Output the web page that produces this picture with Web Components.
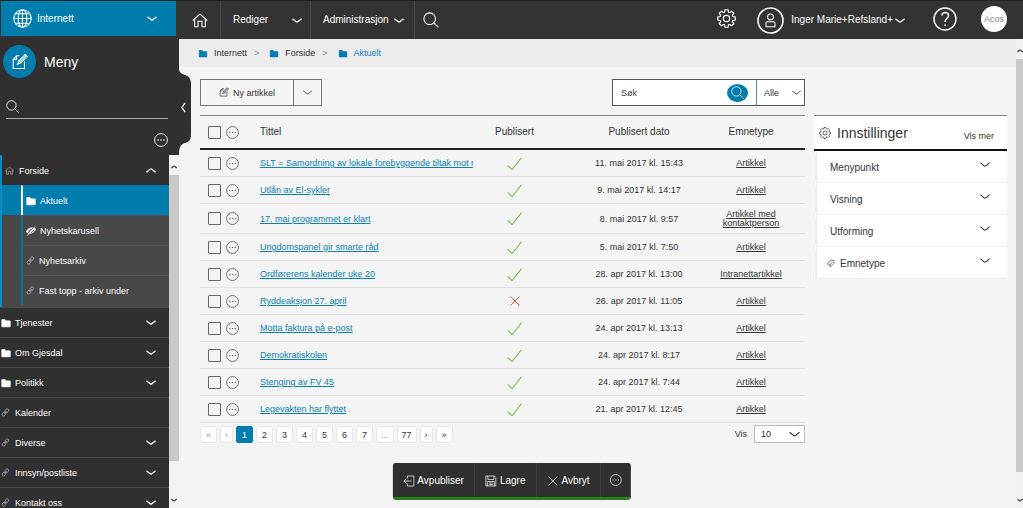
<!DOCTYPE html>
<html lang="no">
<head>
<meta charset="utf-8">
<meta name="viewport" content="width=device-width, initial-scale=1">
<title>Aktuelt</title>
<style>
  html, body { margin: 0; height: 100%; }
  body { font: 10px/12px "Liberation Sans", Arial, sans-serif; color: #333; background: #f4f4f4; overflow: hidden; }
</style>
</head>
<body>
<cms-app></cms-app>

<script>
const BASE = `<style>
  *, *::before { box-sizing: border-box; }
  button, input, select { font: inherit; color: inherit; margin: 0; padding: 0; border: 0; background: none; border-radius: 0; text-align: left; }
  button { cursor: pointer; }
  a { color: inherit; text-decoration: none; }
  h1, h2, ul, ol { margin: 0; padding: 0; font: inherit; list-style: none; }
</style>`;

function component(name, html, setup) {
  const template = document.createElement('template');
  template.innerHTML = BASE + html;
  customElements.define(name, class extends HTMLElement {
    connectedCallback() {
      if (this.shadowRoot) return;
      const root = this.attachShadow({ mode: 'open' });
      root.append(template.content.cloneNode(true));
      if (setup) setup(this, root);
    }
  });
}

/* Icons share a 24-unit grid and take their colour from the text. */
const gear = (() => {
  const p = [];
  for (let i = 0; i < 8; i++) {
    [[-17, 8.4], [-10, 11.2], [10, 11.2], [17, 8.4]].forEach(([d, r]) => {
      const a = (i * 45 + d) * Math.PI / 180;
      p.push((12 + r * Math.sin(a)).toFixed(2) + ' ' + (12 - r * Math.cos(a)).toFixed(2));
    });
  }
  return `<path d="M${p.join('L')}Z"/><circle cx="12" cy="12" r="4"/>`;
})();
const ICONS = {
  down: ['0 0 24 12', '<path d="M1 2C5 4 9 10 12 10S19 4 23 2"/>'],
  up: ['0 0 24 12', '<path d="M1 10C5 8 9 2 12 2S19 8 23 10"/>'],
  left: ['0 0 12 24', '<path d="M10 1L2 12L10 23"/>'],
  globe: ['0 0 24 24', '<circle cx="12" cy="12" r="11"/><ellipse cx="12" cy="12" rx="5.5" ry="11"/><path d="M12 1V23M1 12H23M3 6H21M3 18H21"/>'],
  home: ['0 0 24 24', '<path d="M1 13L12 3L23 13M4 11V22H9V14H15V22H20V11"/>'],
  search: ['0 0 24 24', '<circle cx="10" cy="10" r="8.7"/><path d="M16.5 16.5L23 23"/>'],
  gear: ['0 0 24 24', gear],
  person: ['0 0 24 24', '<circle cx="12" cy="12" r="11.1"/><g stroke-width="0.9"><circle cx="12" cy="8.8" r="2.6"/><path d="M8 17.5V14.4Q8 13.2 9.2 13.2H14.8Q16 13.2 16 14.4V17.5Z"/></g>'],
  help: ['0 0 24 24', '<circle cx="12" cy="12" r="11"/><path d="M9 8.5C9 4.5 15.5 4.5 15.5 8.5C15.5 11.5 12 11.5 12 15M12 17.5V19"/>'],
  edit: ['0 0 24 24', '<path d="M12 4H8L3 9V22H19V12M8 4V9H3M9 16L11 11L20 2L23 5L14 14ZM11 11L14 14M12.5 12.5L21 4"/>'],
  dots: ['0 0 24 24', '<circle cx="12" cy="12" r="11"/><path d="M6 12H8M11 12H13M16 12H18" stroke-width="2.2"/>'],
  folder: ['0 0 24 24', '<path d="M2 4H10L12 7H22V21H2Z" fill="currentColor"/>'],
  link: ['0 0 24 24', '<rect x="12" y="2" width="8" height="11" rx="4" transform="rotate(35 16 7)"/><rect x="4" y="11" width="8" height="11" rx="4" transform="rotate(35 8 16)"/><path d="M9 15L15 8"/>'],
  hidden: ['0 0 24 24', '<path d="M1 14C5 4 16 2 23 7C20 17 8 21 1 14Z" fill="currentColor"/><path d="M3 23L22 1"/><path d="M1 21L20 1M6 14L11 8M12 17L19 9" stroke="#484848"/>'],
  check: ['0 0 24 24', '<path d="M1 15L8 22L23 3"/>'],
  cross: ['0 0 24 24', '<path d="M3 3L21 21M21 3L3 21"/>'],
  tag: ['0 0 24 24', '<path d="M3 12L12 4L21 3L21 12L12 21ZM8 12L11 16L17 8"/>'],
  exit: ['0 0 24 24', '<path d="M9 7V2H22V22H9V17M17 12H2M7 7L2 12L7 17"/>'],
  save: ['0 0 24 24', '<path d="M2 2H19L22 5V22H2ZM6 2V9H18V2M5 22V13H19V22M8 16H16M8 19H16"/>']
};
component('cms-icon', `<style>
  :host { display: inline-block; width: 12px; height: 12px; flex: none; }
  svg { display: block; width: 100%; height: 100%; fill: none; stroke: currentColor; stroke-width: var(--stroke, 2); }
</style><svg aria-hidden="true"></svg>`, (host, root) => {
  const [box, body] = ICONS[host.getAttribute('name')];
  const svg = root.querySelector('svg');
  svg.setAttribute('viewBox', box);
  svg.innerHTML = body;
});

component('cms-scroll', `<style>
  :host { display: flex; flex-direction: column; align-items: center; justify-content: space-between; background: #f2f2f2; color: #444; overflow: hidden; }
  .thumb { width: 100%; flex: 1; background: #c9c9c9; }
  cms-icon { width: 6px; height: 4px; margin: 10px 0 6px; --stroke: 5; }
  cms-icon:last-child { margin: var(--end, 26px) 0 6px; }
</style><cms-icon name="up"></cms-icon><div class="thumb"></div><cms-icon name="down"></cms-icon>`);

component('cms-header', `<style>
  :host { display: flex; height: 39px; background: #333; color: #fff; border-top: 1px solid #222; }
  button, a { display: flex; align-items: center; }
  .site { width: 175px; height: 35px; margin: 0 4px 0 1px; padding: 0 19px 0 12px; gap: 5px; background: #007cad; }
  .site cms-icon:first-child { width: 19px; height: 19px; --stroke: 1.4; }
  .site span { flex: 1; }
  nav { display: flex; margin-left: -1px; }
  nav > * { border-right: 1px solid #484848; padding: 0 12px; height: 38px; }
  .home { width: 42px; padding: 0 13px; }
  .home cms-icon { width: 16px; height: 16px; --stroke: 1.6; }
  .edit { width: 90px; justify-content: space-between; padding-right: 8px; }
  .admin { width: 104px; justify-content: space-between; padding-right: 10px; }
  .find { border: 0; padding: 0 8px; }
  .find cms-icon { width: 16px; height: 16px; --stroke: 1.6; }
  .down { width: 10px; height: 5px; --stroke: 3; }
  .tools { display: flex; align-items: center; margin: 0 16px 3px auto; }
  .gear { width: 19px; height: 19px; --stroke: 1.5; }
  .user { margin: 3px 28px 0 21px; gap: 2px; }
  .user cms-icon:first-child { width: 27px; height: 27px; margin-right: 5px; --stroke: 1.4; }
  .help { width: 24px; height: 24px; --stroke: 1.4; }
  .acos { width: 26px; height: 26px; margin-left: 24px; border-radius: 50%; background: #fff; color: #888; font-size: 9px; justify-content: center; }
</style>
<button class="site"><cms-icon name="globe"></cms-icon><span>Internett</span><cms-icon class="down" name="down"></cms-icon></button>
<nav>
  <a class="home" href="#" aria-label="Hjem"><cms-icon name="home"></cms-icon></a>
  <button class="edit">Rediger<cms-icon class="down" name="down"></cms-icon></button>
  <button class="admin">Administrasjon<cms-icon class="down" name="down"></cms-icon></button>
  <button class="find" aria-label="Finn"><cms-icon name="search"></cms-icon></button>
</nav>
<div class="tools">
  <button aria-label="Oppsett"><cms-icon class="gear" name="gear"></cms-icon></button>
  <button class="user"><cms-icon name="person"></cms-icon>Inger Marie+Refsland+<cms-icon class="down" name="down"></cms-icon></button>
  <button aria-label="Hjelp"><cms-icon class="help" name="help"></cms-icon></button>
  <a class="acos" href="#">Acos</a>
</div>`);

component('cms-tree-item', `<style>
  :host { display: block; font-size: 9px; color: #fff; }
  a { display: flex; align-items: center; height: 30px; padding: 0 13px 0 1px; border-top: 1px solid #4a4a4a; gap: 4px; }
  span { flex: 1; }
  .icon { width: 10px; height: 10px; }
  .down { width: 10px; height: 5px; --stroke: 3.4; }
  :host([icon="link"]) .icon, :host([icon="home"]) .icon { color: #aaa; width: 9px; height: 9px; margin-right: 1px; }
  :host([icon="home"]) a { padding-left: 5px; border-color: #303030; }
  :host([sub]) { background: #484848; padding-left: 21px; }
  :host([sub]) a { border-left: 2px solid #077594; padding-left: 3px; border-top-color: #545454; }
  :host([sub]) .icon { margin-right: 0; }
  :host([current]) { background: #007cad; }
  :host([current]) a { border-left-color: #fff; border-top-color: #007cad; }
</style><a href="#"></a>`, (host, root) => {
  const a = root.querySelector('a');
  const arrow = host.getAttribute('arrow');
  a.innerHTML = `<cms-icon class="icon" name="${host.getAttribute('icon')}"></cms-icon><span>${host.getAttribute('label')}</span>` +
    (arrow ? `<cms-icon class="down" name="${arrow}"></cms-icon>` : '');
});

component('cms-sidebar', `<style>
  :host { display: flex; flex-direction: column; position: relative; width: 179px; background: #303030; color: #fff; min-height: 0; }
  .title { display: flex; align-items: center; gap: 8px; height: 33px; margin: 6px 0 0 3px; font-size: 14px; line-height: 16px; }
  .badge { display: grid; place-items: center; width: 33px; height: 33px; border-radius: 50%; background: #007cad; }
  .badge cms-icon { width: 17px; height: 17px; --stroke: 1.5; }
  .find { display: flex; align-items: center; height: 24px; margin: 17px 11px 0 6px; border-bottom: 1px solid #aaa; }
  .find cms-icon { width: 13px; height: 13px; --stroke: 1.6; }
  .find input { flex: 1; min-width: 0; outline: 0; }
  .more { align-self: flex-end; margin: 14px 11px 8px; height: 14px; }
  .more cms-icon { width: 14px; height: 14px; --stroke: 1.6; }
  .body { display: flex; flex: 1; min-height: 0; }
  .tree { flex: 1; overflow: hidden; }
  .open { position: relative; padding-bottom: 2px; background: #484848; }
  .open cms-tree-item:first-child { background: #303030; }
  .open::before { content: ""; position: absolute; left: 0; top: 0; bottom: 0; width: 2px; background: #078dbe; }
  cms-scroll { width: 10px; --end: 37px; }
  .fold { position: absolute; left: 178px; top: 27px; width: 13px; height: 88px; z-index: 2; }
  .fold svg { display: block; width: 13px; height: 88px; }
  .fold cms-icon { position: absolute; left: 3px; top: 36px; width: 5px; height: 11px; color: #fff; --stroke: 3; }
</style>
<div class="title"><div class="badge"><cms-icon name="edit"></cms-icon></div><h2>Meny</h2></div>
<label class="find"><cms-icon name="search"></cms-icon><input type="text" aria-label="Søk i meny"></label>
<button class="more" aria-label="Flere valg"><cms-icon name="dots"></cms-icon></button>
<div class="body">
  <nav class="tree">
    <div class="open">
      <cms-tree-item icon="home" label="Forside" arrow="up"></cms-tree-item>
      <cms-tree-item sub current icon="folder" label="Aktuelt"></cms-tree-item>
      <cms-tree-item sub icon="hidden" label="Nyhetskarusell"></cms-tree-item>
      <cms-tree-item sub icon="link" label="Nyhetsarkiv"></cms-tree-item>
      <cms-tree-item sub icon="link" label="Fast topp - arkiv under"></cms-tree-item>
    </div>
    <cms-tree-item icon="folder" label="Tjenester" arrow="down"></cms-tree-item>
    <cms-tree-item icon="folder" label="Om Gjesdal" arrow="down"></cms-tree-item>
    <cms-tree-item icon="folder" label="Politikk" arrow="down"></cms-tree-item>
    <cms-tree-item icon="link" label="Kalender"></cms-tree-item>
    <cms-tree-item icon="link" label="Diverse" arrow="down"></cms-tree-item>
    <cms-tree-item icon="link" label="Innsyn/postliste" arrow="down"></cms-tree-item>
    <cms-tree-item icon="link" label="Kontakt oss" arrow="down"></cms-tree-item>
  </nav>
  <cms-scroll></cms-scroll>
</div>
<button class="fold" aria-label="Skjul meny"><svg viewBox="0 0 13 88" fill="#303030"><path d="M0 0C1 6 3 8 7 9S13 13 13 18V68C13 74 11 76 7 77S1 81 1 88H0Z"/></svg><cms-icon name="left"></cms-icon></button>`);

component('cms-crumbs', `<style>
  :host { display: block; background: #ececec; font-size: 9px; }
  ol { display: flex; align-items: center; height: 28px; padding-left: 19px; gap: 7px; }
  li { display: flex; align-items: center; gap: 6px; }
  li + li::before { content: ">"; color: #888; margin-right: 4px; }
  cms-icon { width: 10px; height: 9px; color: #007cad; }
  li:last-child { color: #0a82b4; }
</style>
<nav><ol>
  <li><cms-icon name="folder"></cms-icon><a href="#">Internett</a></li>
  <li><cms-icon name="folder"></cms-icon><a href="#">Forside</a></li>
  <li><cms-icon name="folder"></cms-icon><a href="#">Aktuelt</a></li>
</ol></nav>`);

component('cms-toolbar', `<style>
  :host { display: flex; justify-content: space-between; height: 27px; font-size: 9px; }
  .new, .search { display: flex; border: 1px solid #777; }
  .new button { display: flex; align-items: center; justify-content: center; gap: 4px; width: 92px; }
  .new button + button { width: 28px; border-left: 1px solid #777; }
  .new cms-icon { width: 10px; height: 10px; --stroke: 1.6; margin-bottom: 2px; }
  .new .down, .down { width: 9px; height: 5px; --stroke: 2.6; margin: 0; }
  .search { width: 193px; background: #fff; border-color: #555; }
  input { flex: 1; min-width: 0; padding-left: 8px; outline: 0; }
  input::placeholder { color: #444; opacity: 1; }
  .go { display: grid; place-items: center; align-self: center; width: 21px; height: 18px; border-radius: 50%; background: #007cad; color: #fff; margin-right: 8px; }
  .go cms-icon { width: 13px; height: 13px; --stroke: 1.4; }
  .type { display: flex; align-items: center; width: 48px; border-left: 1px solid #4790ad; padding-right: 3px; }
  select { appearance: none; flex: 1; min-width: 0; padding-left: 7px; height: 100%; outline: 0; }
</style>
<div class="new"><button><cms-icon name="edit"></cms-icon>Ny artikkel</button><button aria-label="Flere typer"><cms-icon class="down" name="down"></cms-icon></button></div>
<div class="search">
  <input type="text" placeholder="Søk" aria-label="Søk">
  <button class="go" aria-label="Søk"><cms-icon name="search"></cms-icon></button>
  <label class="type"><select aria-label="Type"><option>Alle</option></select><cms-icon class="down" name="down"></cms-icon></label>
</div>`);

const ARTICLES = [
  ['SLT = Samordning av lokale forebyggende tiltak mot r', 1, '11. mai 2017 kl. 15:43', 'Artikkel'],
  ['Utlån av El-sykler', 1, '9. mai 2017 kl. 14:17', 'Artikkel'],
  ['17. mai programmet er klart', 1, '8. mai 2017 kl. 9:57', 'Artikkel med kontaktperson'],
  ['Ungdomspanel gir smarte råd', 1, '5. mai 2017 kl. 7:50', 'Artikkel'],
  ['Ordførerens kalender uke 20', 1, '28. apr 2017 kl. 13:00', 'Intranettartikkel'],
  ['Ryddeaksjon 27. april', 0, '26. apr 2017 kl. 11:05', 'Artikkel'],
  ['Motta faktura på e-post', 1, '24. apr 2017 kl. 13:13', 'Artikkel'],
  ['Demokratiskolen', 1, '24. apr 2017 kl. 8:17', 'Artikkel'],
  ['Stenging av FV 45', 1, '24. apr 2017 kl. 7:44', 'Artikkel'],
  ['Legevakten har flyttet', 1, '21. apr 2017 kl. 12:45', 'Artikkel']
];
component('cms-articles', `<style>
  :host { display: block; font-size: 9px; }
  table { width: 100%; table-layout: fixed; border-collapse: separate; border-spacing: 0; border-top: 1px solid #888; }
  th, td { padding: 0; height: 27px; text-align: center; font-weight: 400; border-bottom: 1px solid #e2e2e2; }
  th { height: 34px; font-size: 10px; border-bottom: 2px solid #222; }
  .pick { width: 60px; }
  .state { width: 108px; padding-right: 25px; }
  .date { width: 116px; }
  .type { width: 108px; }
  td.type { line-height: 9px; }
  .long .type { height: 30px; padding: 0 20px; }
  .name { text-align: left; overflow: hidden; white-space: nowrap; }
  td.name a { color: #0a82b4; }
  td a { text-decoration: underline; text-underline-offset: 1px; }
  .tools { display: flex; align-items: center; gap: 5px; padding-left: 8px; }
  input { appearance: none; width: 13px; height: 13px; border: 1px solid #666; border-radius: 1px; }
  .tools cms-icon { display: block; width: 13px; height: 13px; color: #555; --stroke: 1.5; }
  .yes { display: block; margin: auto; width: 15px; height: 15px; color: #7fbf45; --stroke: 1.8; }
  .no { display: block; margin: auto; width: 12px; height: 12px; color: #e8503a; }
</style>
<table>
  <thead><tr>
    <th class="pick"><div class="tools"><input type="checkbox" aria-label="Velg alle"><button aria-label="Flere valg"><cms-icon name="dots"></cms-icon></button></div></th>
    <th class="name">Tittel</th><th class="state">Publisert</th><th class="date">Publisert dato</th><th class="type">Emnetype</th>
  </tr></thead>
  <tbody></tbody>
</table>`, (host, root) => {
  root.querySelector('tbody').innerHTML = ARTICLES.map(([title, live, date, type]) => `<tr${type.includes(' ') ? ' class="long"' : ''}>
    <td class="pick"><div class="tools"><input type="checkbox" aria-label="Velg"><button aria-label="Flere valg"><cms-icon name="dots"></cms-icon></button></div></td>
    <td class="name"><a href="#">${title}</a></td>
    <td class="state"><cms-icon class="${live ? 'yes' : 'no'}" name="${live ? 'check' : 'cross'}"></cms-icon></td>
    <td class="date">${date}</td><td class="type"><a href="#">${type}</a></td></tr>`).join('');
});

component('cms-pager', `<style>
  :host { display: flex; justify-content: space-between; font-size: 9px; padding-top: 2px; }
  ul { display: flex; gap: 3px; padding-top: 1px; }
  a { display: grid; place-items: center; box-sizing: border-box; min-width: 17px; height: 17px; padding: 0 4px; background: #fff; border: 1px solid #e8e8e8; border-radius: 2px; }
  .off { color: #999; }
  .now { background: #007cad; border-color: #007cad; color: #fff; }
  .step { min-width: 13px; }
  label { display: flex; align-items: center; gap: 7px; }
  .box { display: flex; align-items: center; width: 51px; height: 18px; padding-right: 4px; border: 1px solid #bbb; background: #fff; }
  select { appearance: none; flex: 1; min-width: 0; padding-left: 6px; outline: 0; }
  cms-icon { width: 11px; height: 6px; --stroke: 2.6; }
</style>
<ul>
  <li><a class="off" href="#">«</a></li><li><a class="off step" href="#">‹</a></li><li><a class="now" href="#">1</a></li>
  <li><a href="#">2</a></li><li><a href="#">3</a></li><li><a href="#">4</a></li><li><a href="#">5</a></li><li><a href="#">6</a></li><li><a href="#">7</a></li>
  <li><a class="off" href="#">...</a></li><li><a href="#">77</a></li><li><a class="step" href="#">›</a></li><li><a href="#">»</a></li>
</ul>
<label>Vis<span class="box"><select aria-label="Antall"><option>10</option></select><cms-icon name="down"></cms-icon></span></label>`);

component('cms-settings', `<style>
  :host { display: block; width: 193px; }
  header { display: flex; align-items: center; height: 36px; padding: 0 13px 0 5px; background: #fff; border-top: 1px solid #888; border-bottom: 2px solid #111; }
  header cms-icon { width: 12px; height: 12px; --stroke: 1.4; }
  h2 { flex: 1; font-size: 14px; line-height: 16px; padding-left: 6px; }
  header a { font-size: 9px; padding-top: 6px; }
  li { display: flex; background: #fff; height: 32px; padding-left: 1px; border-bottom: 1px solid #eee; }
  li button { display: flex; align-items: center; flex: 1; margin-top: 2px; padding: 0 17px 0 13px; border-left: 2px solid #ebebeb; }
  li span { flex: 1; }
  li .down { width: 10px; height: 5px; --stroke: 2.6; margin-bottom: 6px; }
  li .tag { width: 9px; height: 9px; margin: 0 5px 0 -4px; --stroke: 1.6; }
</style>
<header><cms-icon name="gear"></cms-icon><h2>Innstillinger</h2><a href="#">Vis mer</a></header>
<ul>
  <li><button><span>Menypunkt</span><cms-icon class="down" name="down"></cms-icon></button></li>
  <li><button><span>Visning</span><cms-icon class="down" name="down"></cms-icon></button></li>
  <li><button><span>Utforming</span><cms-icon class="down" name="down"></cms-icon></button></li>
  <li><button><cms-icon class="tag" name="tag"></cms-icon><span>Emnetype</span><cms-icon class="down" name="down"></cms-icon></button></li>
</ul>`);

component('cms-actions', `<style>
  :host { display: flex; height: 37px; background: #303030; color: #fff; border-bottom: 3px solid #278319; border-radius: 3px; overflow: hidden; }
  button { display: flex; align-items: center; gap: 3px; padding: 2px 10px 0; }
  button + button { border-left: 1px solid #404040; }
  cms-icon { width: 12px; height: 12px; --stroke: 1.4; }
  button:last-child { padding: 0 9px; }
</style>
<button><cms-icon name="exit"></cms-icon>Avpubliser</button>
<button><cms-icon name="save"></cms-icon>Lagre</button>
<button><cms-icon name="cross"></cms-icon>Avbryt</button>
<button aria-label="Flere valg"><cms-icon name="dots"></cms-icon></button>`);

component('cms-app', `<style>
  :host { display: grid; grid-template-rows: auto 1fr; height: 100vh; overflow: hidden; position: relative; }
  .body { display: flex; min-height: 0; }
  main { flex: 1; min-width: 0; overflow: hidden; }
  .work { display: flex; align-items: flex-start; gap: 9px; padding: 12px 9px 0 21px; }
  .list { flex: 1; min-width: 0; }
  cms-toolbar { margin-bottom: 9px; }
  cms-settings { margin-top: 36px; }
  cms-scroll { width: 7px; }
  cms-actions { position: absolute; bottom: 8px; left: 50%; transform: translateX(-50%); z-index: 3; }
</style>
<cms-header></cms-header>
<div class="body">
  <cms-sidebar></cms-sidebar>
  <main>
    <cms-crumbs></cms-crumbs>
    <div class="work">
      <div class="list"><cms-toolbar></cms-toolbar><cms-articles></cms-articles><cms-pager></cms-pager></div>
      <cms-settings></cms-settings>
    </div>
  </main>
  <cms-scroll></cms-scroll>
</div>
<cms-actions></cms-actions>`);
</script>
</body>
</html>
